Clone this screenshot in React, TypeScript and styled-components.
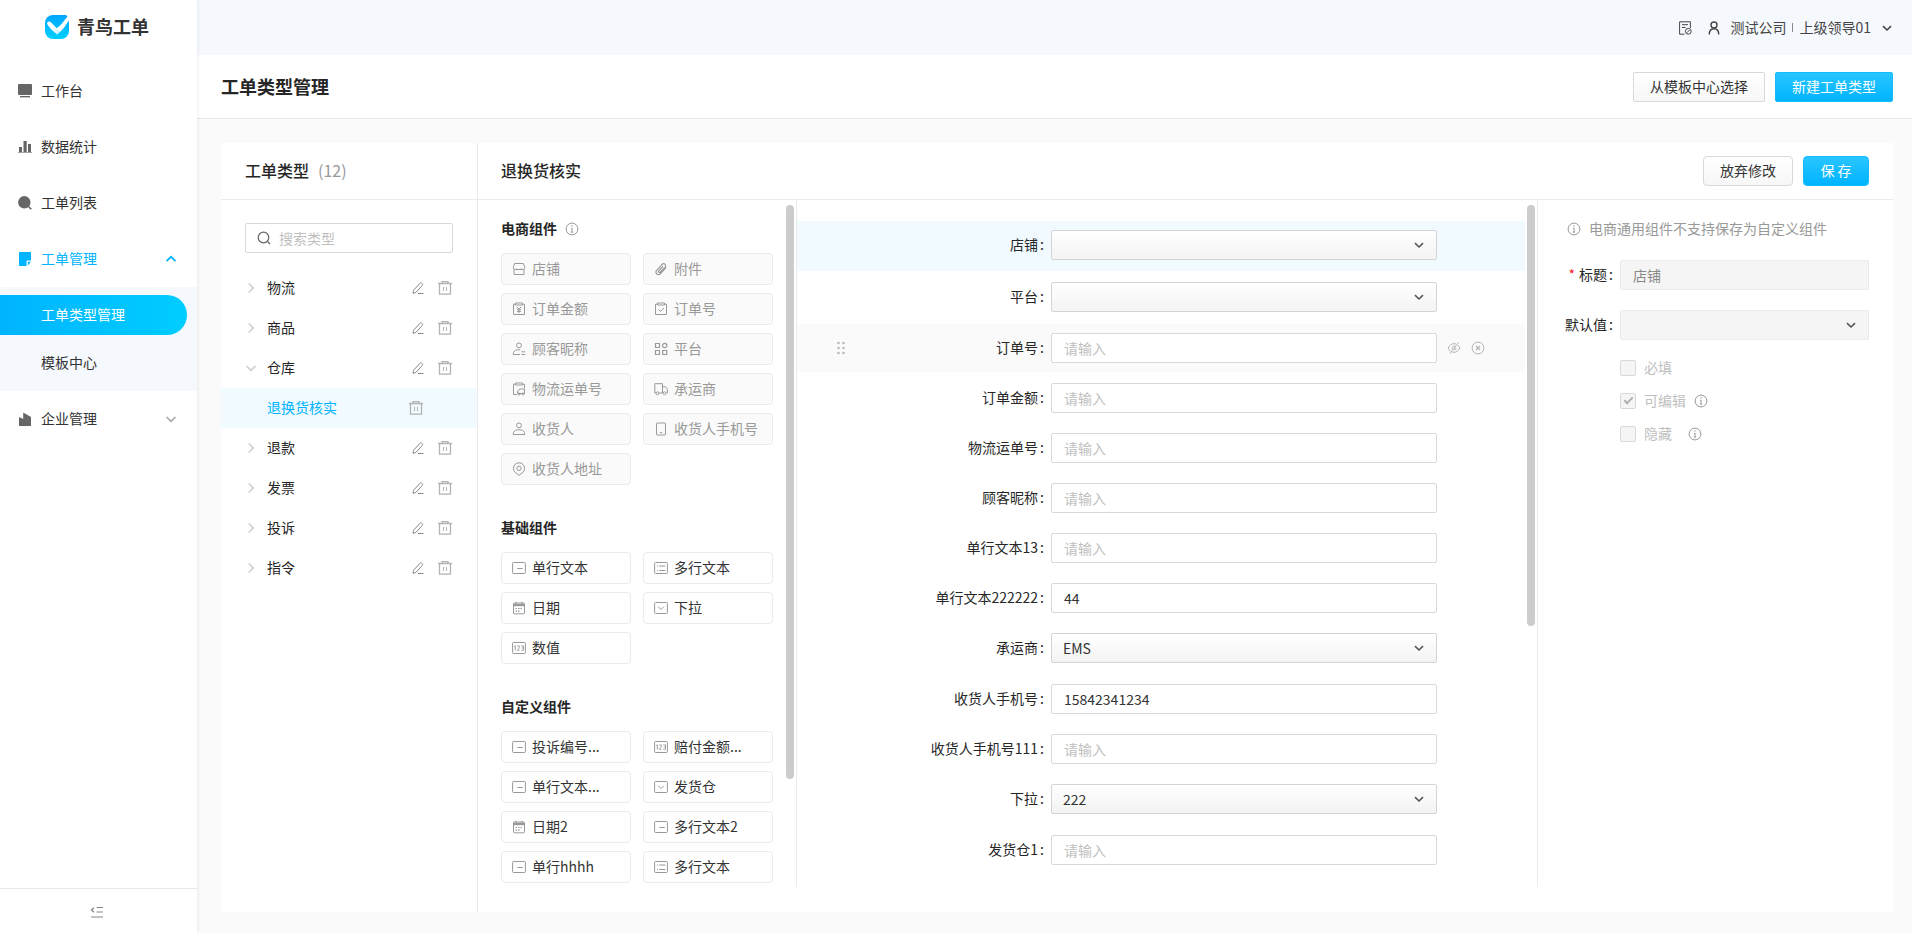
import React from "react";
import styled, { createGlobalStyle, css } from "styled-components";

const GlobalStyle = createGlobalStyle`
  *, *::before, *::after { box-sizing: border-box; }
  body {
    margin: 0;
    background: #fafafa;
    color: #333;
    font-family: "Noto Sans CJK SC", sans-serif;
    font-size: 14px;
    line-height: 20px;
  }
  button, input, select { font: inherit; color: inherit; margin: 0; }
  h1, h2, h3, ul, p { margin: 0; padding: 0; }
  ul { list-style: none; }
  a { color: inherit; text-decoration: none; }
  svg { display: block; flex: none; }
`;

/* ---------- icons ---------- */

const iconPaths: Record<string, React.ReactNode> = {
  desktop: (
    <>
      <rect x="0" y="0" width="14" height="11" rx="1" fill="currentColor" stroke="none" />
      <rect x="2" y="12" width="10" height="1.4" fill="currentColor" stroke="none" />
    </>
  ),
  chart: (
    <g fill="currentColor" stroke="none">
      <rect x="1" y="7" width="3" height="5" />
      <rect x="5.5" y="1" width="3.2" height="11" />
      <rect x="10" y="4" width="3" height="8" />
      <rect x="0" y="12" width="14" height="1" opacity="0.6" />
    </g>
  ),
  lens: (
    <>
      <circle cx="6.3" cy="6.3" r="6.2" fill="currentColor" stroke="none" />
      <path d="M10.5 10.5 13.3 13.3" strokeWidth="1.6" />
    </>
  ),
  note: (
    <>
      <path d="M1.8 0h10.4a.8.8 0 0 1 .8.8V8.500H9.500a1 1 0 0 0-1 1V14H1.800a.8.8 0 0 1-.8-.8V.8a.8.8 0 0 1 .8-.8z" fill="currentColor" stroke="none" />
      <path d="M9.800 13.600V9.800H13z" fill="currentColor" stroke="none" />
    </>
  ),
  factory: (
    <path d="M1 14V5l4.200 2V0.500L13 5v9z" fill="currentColor" stroke="none" />
  ),
  chevronUp: <path d="M2.500 9.200 7 4.800l4.500 4.400" strokeWidth="1.7" />,
  chevronDown: <path d="M2.500 5 7 9.400 11.500 5" strokeWidth="1.7" />,
  chevronRight: <path d="M4.700 2.500 9.200 7 4.700 11.500" strokeWidth="1.7" />,
  arrowDown: <path d="M3 5.200 7 9l4-3.800" strokeWidth="1.6" />,
  search: (
    <>
      <circle cx="6.500" cy="6.500" r="5.300" strokeWidth="1.200" />
      <path d="m10.400 10.400 2.600 2.600" strokeWidth="1.300" />
    </>
  ),
  edit: (
    <>
      <path d="M2 12.300 2.500 9.300 8.900 2.300a1.200 1.200 0 0 1 1.700-.1l.6.5a1.200 1.200 0 0 1 .1 1.700L5 11.300z" />
      <path d="M7 12.500h5.500" />
    </>
  ),
  trash: (
    <>
      <path d="M0 2.500h14M4 2.500V.5h6v2M1.500 2.500v10.700h11V2.500" strokeWidth="1.300" />
      <path d="M5.500 6v4M8.500 6v4" />
    </>
  ),
  info: (
    <>
      <circle cx="7" cy="7" r="5.900" />
      <path d="M7 6v4.200M6 6.300h1M5.800 10.100h2.400" />
      <circle cx="7" cy="4" r=".7" fill="currentColor" stroke="none" />
    </>
  ),
  shop: (
    <path d="M2.600 1.500h8.800l1.200 3v1.800a1.500 1.500 0 0 1-1.500 1.200H2.900a1.500 1.500 0 0 1-1.500-1.200V4.500zM2 7.500v5h10v-5M4.800 6.500v1M9.200 6.500v1" />
  ),
  clip: (
    <path d="m12 5.600-5.700 6.200a2.500 2.500 0 0 1-3.600 0 2.600 2.600 0 0 1 0-3.500l5.500-6a2 2 0 0 1 2.900 0 2.200 2.200 0 0 1 0 3L6 10.500a1 1 0 0 1-1.400-1.300L9 4.500" strokeWidth="1.2" />
  ),
  money: (
    <>
      <path d="M3.500 2.200H1.500v10.300h11V2.200h-2M3.500 1h7v2h-7z" />
      <path d="m4.800 4.800 2.200 2.400 2.200-2.400M7 7.200v4M5 7.700h4M5 9.400h4" />
    </>
  ),
  order: (
    <>
      <path d="M3.500 2.200H1.500v10.300h11V2.200h-2M3.500 1h7v2h-7z" />
      <path d="m4.500 7.500 2 2 3.300-3.500" />
    </>
  ),
  nickname: (
    <>
      <circle cx="7" cy="3.400" r="2.400" />
      <path d="M8 12.500H1.200c0-3 1.700-4.700 4.300-4.700h2.700M9.500 9.800h3.700M9.500 12.500h3.700" />
    </>
  ),
  platform: (
    <>
      <path d="M1.500 1.500h4v4h-4zM1.500 8.500h4v4h-4zM8.700 8.500h4v4h-4z" strokeWidth="1.2" />
      <circle cx="10.700" cy="3.500" r="2.200" strokeWidth="1.2" />
    </>
  ),
  waybill: (
    <>
      <path d="M5 12.500H1.500V2.200h2M10.500 2.200h2v4M3.500 1h7v2h-7z" />
      <path d="M5.500 11.500V9L8 7h4.500v4.500z" />
      <circle cx="7.200" cy="12" r="1" />
      <circle cx="11" cy="12" r="1" />
    </>
  ),
  truck: (
    <>
      <path d="M2 11H.8V1.700h7.700V11H5M8.500 4.700h3l1.900 2.600V11h-1" />
      <circle cx="3.500" cy="11.300" r="1.400" />
      <circle cx="10.500" cy="11.300" r="1.400" />
    </>
  ),
  person: (
    <>
      <circle cx="7" cy="3.400" r="2.400" />
      <path d="M1.200 12.500c0-2.800 1.700-4.700 4.300-4.700h3c2.600 0 4.300 1.900 4.300 4.700z" />
    </>
  ),
  phone: (
    <>
      <rect x="2.500" y="1" width="9" height="12" rx=".6" />
      <path d="M5.700 10.700h2.600" />
    </>
  ),
  pin: (
    <>
      <path d="M7 13.300 3.200 10.500a5.600 5.600 0 1 1 7.600 0z" />
      <circle cx="7" cy="6.300" r="2.200" />
    </>
  ),
  line: (
    <>
      <rect x=".6" y="1.500" width="12.800" height="11" rx=".8" />
      <path d="M5.300 7.500h5.400" />
    </>
  ),
  lines: (
    <>
      <rect x=".6" y="1.500" width="12.800" height="11" rx=".8" />
      <path d="M3 5h1M5.300 5h6M3 9.500h1M5.300 9.500h6" />
    </>
  ),
  calendar: (
    <>
      <rect x="1.500" y="2" width="11" height="10.800" rx=".8" />
      <path d="M1.500 4h11" strokeWidth="2.400" />
      <path d="M4 .8v2M10 .8v2" />
      <path d="M3.500 7.500h7M3.500 10.200h4.300" strokeWidth="1.2" strokeDasharray="1.500 1" />
    </>
  ),
  dropdown: (
    <>
      <rect x=".6" y="1.500" width="12.800" height="11" rx=".8" />
      <path d="m4.200 5.700 2.800 2.800 2.800-2.800" />
    </>
  ),
  number: (
    <>
      <rect x=".6" y="1.500" width="12.800" height="11" rx=".8" />
      <path d="m2.400 5.500.9-.8v4.800M5.300 4.900h2v2l-2 2.400h2.200M9.300 4.900h2.200v4.400H9.300M9.700 7h1.700" strokeWidth=".9" />
    </>
  ),
  hidden: (
    <>
      <path d="M3.500 10.200a5.400 5.400 0 0 1-2.300-3.200C2.500 4 4.600 2.700 7 2.700c.8 0 1.500.1 2.200.4M11 4.200A6 6 0 0 1 12.800 7c-1.300 3-3.400 4.300-5.800 4.300-.6 0-1.200-.1-1.700-.3M11.500 1.500 3 12.500" />
      <path d="M8 5.300A2 2 0 0 0 5.400 8M8.800 6.500a2 2 0 0 1-1.900 2.500" />
    </>
  ),
  close: (
    <>
      <circle cx="7" cy="7" r="5.900" />
      <path d="m5 5 4 4M9 5 5 9" strokeWidth="1.300" />
    </>
  ),
  drag: (
    <g fill="currentColor" stroke="none">
      {[2, 7, 12].map((y) => (
        <React.Fragment key={y}>
          <circle cx="4.500" cy={y} r="1.300" />
          <circle cx="9.500" cy={y} r="1.300" />
        </React.Fragment>
      ))}
    </g>
  ),
  record: (
    <>
      <path d="M6.500 13.200H1.600V.8h10.800V7M4 3.700h6M4 6.500h3.500" />
      <circle cx="10.300" cy="10.300" r="2.900" />
      <path d="m9 11.700 2.600-2.800" />
    </>
  ),
  user: (
    <>
      <circle cx="7" cy="4" r="3" strokeWidth="1.400" />
      <path d="M2.300 13.500c0-3.300 1.600-5.700 4.700-5.700s4.700 2.400 4.700 5.700" strokeWidth="1.400" />
    </>
  ),
  collapse: (
    <>
      <path d="M4 2.800 1.500 5 4 7.200" strokeWidth="1.300" />
      <path d="M6.500 2.500H13M6.500 7H13M1 12h12" strokeWidth="1.200" />
    </>
  ),
};

const Icon = ({ name, size = 14 }: { name: string; size?: number }) => (
  <svg width={size} height={size} viewBox="0 0 14 14" fill="none" stroke="currentColor" strokeWidth="1" aria-hidden="true">
    {iconPaths[name]}
  </svg>
);

const Logo = () => (
  <svg width="24" height="24" viewBox="0 0 24 24" aria-hidden="true">
    <defs>
      <linearGradient id="logoFill" x1="0" y1="0" x2="0" y2="1">
        <stop offset="0" stopColor="#00a6ff" />
        <stop offset="1" stopColor="#00d0ff" />
      </linearGradient>
      <linearGradient id="logoWing" x1="0" y1="0" x2="1" y2="1">
        <stop offset="0.500" stopColor="#fff" />
        <stop offset="1" stopColor="#b5ecff" />
      </linearGradient>
    </defs>
    <path d="M8 0h12c1.500 0 2.500 1 3 2.500L24 8v8a8 8 0 0 1-8 8H8a8 8 0 0 1-8-8V8a8 8 0 0 1 8-8z" fill="url(#logoFill)" />
    <path d="M12 19.500 10 14C14 12.500 17 8.500 20 4.500L24 0v5C21 10.500 17 16 12 19.500z" fill="#fff" />
    <path d="M12 19.500C8 16.500 4.500 13 2.300 9.300c-1-2 1.600-4 3.400-2.200l5.300 5.400 4 4z" fill="url(#logoWing)" />
  </svg>
);

/* ---------- shell ---------- */

/* CJK glyphs sit low in their line box; the bottom padding centres them beside icons. */
const Text = styled.span`
  display: block;
  padding-bottom: 2px;
`;

const Shell = styled.div`
  display: flex;
  height: 100vh;
`;

const Sidebar = styled.aside`
  display: flex;
  flex: none;
  flex-direction: column;
  width: 197px;
  background: #fff;
  box-shadow: 0 0 4px rgba(0, 0, 0, 0.1);
  z-index: 1;
`;

const Brand = styled.div`
  display: flex;
  align-items: center;
  gap: 8px;
  height: 54px;
  padding-left: 45px;
  margin-bottom: 9px;
  font-size: 18px;
  font-weight: 700;
`;

const Menu = styled.nav`
  flex: 1;
`;

const MenuItem = styled.a<{ $open?: boolean }>`
  display: flex;
  align-items: center;
  gap: 9px;
  height: 56px;
  padding: 0 19px 0 18px;
  color: ${(p) => (p.$open ? "#00b4ff" : "#666")};
`;

const MenuText = styled(Text)<{ $open?: boolean }>`
  flex: 1;
  color: ${(p) => (p.$open ? "#00b4ff" : "#333")};
`;

const MenuArrow = styled.span<{ $open?: boolean }>`
  color: ${(p) => (p.$open ? "#00b4ff" : "#aaa")};
`;

const SubMenu = styled.div`
  display: flex;
  flex-direction: column;
  gap: 8px;
  padding: 8px 10px 8px 0;
  background: #f5f9fd;
`;

const SubItem = styled.a<{ $active?: boolean }>`
  height: 40px;
  padding-left: 41px;
  line-height: 38px;
  border-radius: 0 20px 20px 0;
  ${(p) =>
    p.$active &&
    css`
      color: #fff;
      background: linear-gradient(90deg, #00b4ff, #00cdff);
    `}
`;

const CollapseButton = styled.button`
  display: flex;
  align-items: center;
  justify-content: center;
  height: 45px;
  padding: 2px 4px 0 0;
  border: 0;
  border-top: 1px solid #e8e8e8;
  background: none;
  color: #888;
`;

const Main = styled.div`
  display: flex;
  flex: 1;
  flex-direction: column;
  min-width: 0;
`;

const TopBar = styled.header`
  display: flex;
  flex: none;
  align-items: center;
  justify-content: flex-end;
  height: 55px;
  padding-right: 18px;
  background: #f5f9fd;
  color: #444;
`;

const TopIcons = styled.div`
  display: flex;
  gap: 15px;
  margin-right: 9px;
`;

const Account = styled.button`
  display: flex;
  align-items: center;
  padding: 0;
  border: 0;
  background: none;
`;

const Divider = styled.span`
  width: 1px;
  height: 9px;
  margin: 0 6px;
  background: #888;
`;

const AccountArrow = styled.span`
  margin-left: 9px;
`;

const PageHead = styled.div`
  display: flex;
  flex: none;
  align-items: center;
  justify-content: space-between;
  height: 64px;
  padding: 0 19px 0 24px;
  border-bottom: 1px solid #e8e8e8;
  background: #fff;
`;

const PageTitle = styled.h1`
  && { padding-bottom: 2px; }
  font-size: 18px;
  font-weight: 700;
  color: #262626;
`;

const Actions = styled.div`
  display: flex;
  gap: 10px;
`;

const Button = styled.button<{ $primary?: boolean; $round?: boolean }>`
  min-width: 66px;
  height: 30px;
  padding: 0 16px 2px;
  border: 1px solid ${(p) => (p.$primary ? "#12bcff" : "#d9d9d9")};
  border-radius: ${(p) => (p.$round ? "4px" : "2px")};
  color: ${(p) => (p.$primary ? "#fff" : "#333")};
  background: ${(p) => (p.$primary ? "linear-gradient(#29c5ff, #00b4ff)" : "linear-gradient(#fff, #f7f7f7)")};
`;

/* ---------- card ---------- */

const Card = styled.main`
  display: flex;
  flex: 1;
  min-height: 0;
  margin: 24px 19px 21px 24px;
  background: #fff;
`;

const PanelHead = styled.div`
  display: flex;
  flex: none;
  align-items: center;
  height: 57px;
  padding: 0 24px;
  border-bottom: 1px solid #ebebeb;
`;

const PanelTitle = styled.h2`
  && { padding-bottom: 2px; }
  font-size: 16px;
  font-weight: 500;
  color: #262626;
`;

const Count = styled(Text)`
  margin-left: 9px;
  font-size: 16px;
  color: #999;
`;

const TypePanel = styled.section`
  flex: none;
  width: 257px;
  border-right: 1px solid #ebebeb;
`;

const SearchBox = styled.label`
  display: flex;
  align-items: center;
  gap: 8px;
  height: 30px;
  margin: 23px 24px 15px;
  padding: 0 11px;
  border: 1px solid #d9d9d9;
  border-radius: 2px;
  color: #666;
`;

const SearchInput = styled.input`
  flex: 1;
  min-width: 0;
  height: 20px;
  padding: 0;
  border: 0;
  outline: 0;
  background: none;
  &::placeholder { color: #bfbfbf; opacity: 1; }
`;

const TypeRow = styled.li<{ $active?: boolean }>`
  display: flex;
  align-items: center;
  height: 40px;
  padding: ${(p) => (p.$active ? "0 54px 0 46px" : "0 25px 0 23px")};
  color: ${(p) => (p.$active ? "#00b4ff" : "#262626")};
  background: ${(p) => (p.$active ? "#f0faff" : "none")};
`;

const IconButton = styled.button<{ $tone?: string }>`
  padding: 0;
  border: 0;
  background: none;
  color: ${(p) => p.$tone || "#b3b3b3"};
`;

const TypeName = styled(Text)<{ $nested?: boolean }>`
  flex: 1;
  margin-left: ${(p) => (p.$nested ? "0" : "9px")};
`;

const RowTools = styled.span`
  display: flex;
  gap: 13px;
`;

const Editor = styled.section`
  display: flex;
  flex: 1;
  flex-direction: column;
  min-width: 0;
`;

const EditorHead = styled(PanelHead)`
  justify-content: space-between;
  padding-left: 23px;
`;

const EditorBody = styled.div`
  display: flex;
  flex: 1;
  min-height: 0;
  margin-bottom: 25px;
`;

const ScrollPane = styled.div`
  position: relative;
  overflow: hidden;
  border-right: 1px solid #ebebeb;
`;

const Thumb = styled.span<{ $share: number }>`
  position: absolute;
  top: 5px;
  right: 2px;
  width: 8px;
  height: ${(p) => p.$share}%;
  border-radius: 4px;
  background: #ccc;
`;

const Palette = styled(ScrollPane)`
  flex: none;
  width: 319px;
  padding: 19px 23px 0 23px;
`;

const Group = styled.section`
  margin-bottom: 33px;
`;

const GroupTitle = styled.h3`
  display: flex;
  align-items: center;
  gap: 8px;
  height: 20px;
  margin-bottom: 14px;
  font-size: 14px;
  font-weight: 700;
  color: #262626;
`;

const InfoMark = styled.span`
  color: #999;
`;

const PieceGrid = styled.div`
  display: grid;
  grid-template-columns: 130px 130px;
  gap: 8px 12px;
`;

const Piece = styled.button<{ $muted?: boolean }>`
  display: flex;
  align-items: center;
  gap: 6px;
  height: 32px;
  padding: 0 10px;
  border: 1px solid #ebebeb;
  border-radius: 4px;
  text-align: left;
  white-space: nowrap;
  color: ${(p) => (p.$muted ? "#999" : "#333")};
  background: ${(p) => (p.$muted ? "#fafafa" : "#fff")};
  svg { color: #999; }
`;

/* ---------- form ---------- */

const FormPane = styled(ScrollPane)`
  flex: 1;
  min-width: 0;
  padding: 21px 12px 0 0;
`;

const FieldList = styled.div`
  display: flex;
  flex-direction: column;
  gap: 2px;
`;

const FieldRow = styled.div<{ $tone?: "active" | "hover"; $select?: boolean }>`
  display: grid;
  grid-template-columns: 51px 203px minmax(0, 1fr) 88px;
  align-items: start;
  height: ${(p) => (p.$tone === "active" ? "50px" : p.$select ? "49px" : "48px")};
  padding-top: 9px;
  background: ${(p) => (p.$tone === "active" ? "#f0faff" : p.$tone === "hover" ? "#fafafa" : "none")};
`;

const Label = styled.label`
  line-height: 28px;
  text-align: right;
  white-space: nowrap;
  color: #262626;
  &::after {
    content: ":";
    margin: 0 7px 0 2px;
  }
`;

const TextInput = styled.input`
  width: 100%;
  height: 30px;
  padding: 0 12px 1px;
  border: 1px solid #d9d9d9;
  border-radius: 2px;
  outline: 0;
  background: #fff;
  color: #333;
  &::placeholder { color: #bfbfbf; opacity: 1; }
  &:disabled { border-color: #ebebeb; background: #f5f5f5; color: #888; }
`;

const SelectWrap = styled.span`
  position: relative;
  display: block;
`;

const SelectBox = styled.select`
  display: block;
  appearance: none;
  width: 100%;
  height: 30px;
  padding: 0 30px 0 11px;
  border: 1px solid #d4d4d4;
  border-radius: 2px;
  outline: 0;
  background: linear-gradient(#fff, #f3f3f3);
  color: #333;
  &:disabled { border-color: #ebebeb; background: #f5f5f5; opacity: 1; }
`;

const SelectArrow = styled.span`
  position: absolute;
  top: 8px;
  right: 11px;
  color: #555;
  pointer-events: none;
`;

const HandleCell = styled.span`
  display: flex;
  align-items: center;
  justify-content: flex-end;
  height: 30px;
  color: #bbb;
`;

const FieldTools = styled.span`
  display: flex;
  align-items: center;
  gap: 10px;
  height: 30px;
  padding-left: 10px;
`;

/* ---------- properties ---------- */

const Properties = styled.section`
  flex: none;
  width: 355px;
  padding: 19px 24px 0 27px;
`;

const Notice = styled.p`
  && { padding-left: 2px; }
  display: flex;
  align-items: center;
  gap: 8px;
  height: 20px;
  margin-bottom: 21px;
  color: #999;
`;

const PropRow = styled.div`
  display: grid;
  grid-template-columns: 55px minmax(0, 1fr);
  align-items: start;
  margin-bottom: 20px;
`;

const Required = styled.span`
  margin-right: 4px;
  color: #f5222d;
`;

const CheckRow = styled.div`
  display: flex;
  align-items: center;
  height: 16px;
  margin: 0 0 17px 55px;
  color: #bfbfbf;
`;

const CheckLabel = styled.label<{ $wide?: boolean }>`
  display: flex;
  align-items: center;
  gap: 8px;
  margin-right: ${(p) => (p.$wide ? "16px" : "8px")};
`;

const Checkbox = styled.input`
  position: relative;
  appearance: none;
  width: 16px;
  height: 16px;
  border: 1px solid #d9d9d9;
  border-radius: 2px;
  background: #f5f5f5;
  &:checked::after {
    content: "";
    position: absolute;
    top: 1px;
    left: 5px;
    width: 5px;
    height: 9px;
    border: solid #b0b0b0;
    border-width: 0 2px 2px 0;
    transform: rotate(45deg);
  }
`;

/* ---------- data ---------- */

const types: { name: string; open?: boolean; child?: string }[] = [
  { name: "物流" },
  { name: "商品" },
  { name: "仓库", open: true, child: "退换货核实" },
  { name: "退款" },
  { name: "发票" },
  { name: "投诉" },
  { name: "指令" },
];

const groups: { title: string; info?: boolean; muted?: boolean; items: [string, string][] }[] = [
  {
    title: "电商组件",
    info: true,
    muted: true,
    items: [
      ["shop", "店铺"],
      ["clip", "附件"],
      ["money", "订单金额"],
      ["order", "订单号"],
      ["nickname", "顾客昵称"],
      ["platform", "平台"],
      ["waybill", "物流运单号"],
      ["truck", "承运商"],
      ["person", "收货人"],
      ["phone", "收货人手机号"],
      ["pin", "收货人地址"],
    ],
  },
  {
    title: "基础组件",
    items: [
      ["line", "单行文本"],
      ["lines", "多行文本"],
      ["calendar", "日期"],
      ["dropdown", "下拉"],
      ["number", "数值"],
    ],
  },
  {
    title: "自定义组件",
    items: [
      ["line", "投诉编号..."],
      ["number", "赔付金额..."],
      ["line", "单行文本..."],
      ["dropdown", "发货仓"],
      ["calendar", "日期2"],
      ["line", "多行文本2"],
      ["line", "单行hhhh"],
      ["lines", "多行文本"],
    ],
  },
];

type Field = { label: string; select?: boolean; value?: string; tone?: "active" | "hover" };

const fields: Field[] = [
  { label: "店铺", select: true, tone: "active" },
  { label: "平台", select: true },
  { label: "订单号", tone: "hover" },
  { label: "订单金额" },
  { label: "物流运单号" },
  { label: "顾客昵称" },
  { label: "单行文本13" },
  { label: "单行文本222222", value: "44" },
  { label: "承运商", select: true, value: "EMS" },
  { label: "收货人手机号", value: "15842341234" },
  { label: "收货人手机号111" },
  { label: "下拉", select: true, value: "222" },
  { label: "发货仓1" },
];

const Select = ({ id, value = "", disabled }: { id: string; value?: string; disabled?: boolean }) => (
  <SelectWrap>
    <SelectBox id={id} defaultValue={value} disabled={disabled}>
      <option value={value}>{value}</option>
    </SelectBox>
    <SelectArrow>
      <Icon name="arrowDown" />
    </SelectArrow>
  </SelectWrap>
);

const FieldItem = ({ field, id }: { field: Field; id: string }) => (
  <FieldRow $tone={field.tone} $select={field.select}>
    <HandleCell>{field.tone === "hover" && <Icon name="drag" />}</HandleCell>
    <Label htmlFor={id}>{field.label}</Label>
    {field.select ? (
      <Select id={id} value={field.value} />
    ) : (
      <TextInput id={id} placeholder="请输入" defaultValue={field.value} />
    )}
    {field.tone === "hover" && (
      <FieldTools>
        <IconButton aria-label="隐藏">
          <Icon name="hidden" />
        </IconButton>
        <IconButton aria-label="删除">
          <Icon name="close" />
        </IconButton>
      </FieldTools>
    )}
  </FieldRow>
);

export default function App() {
  return (
    <>
      <GlobalStyle />
      <Shell>
        <Sidebar>
          <Brand>
            <Logo />
            <Text>青鸟工单</Text>
          </Brand>
          <Menu>
            <MenuItem href="#">
              <Icon name="desktop" />
              <MenuText>工作台</MenuText>
            </MenuItem>
            <MenuItem href="#">
              <Icon name="chart" />
              <MenuText>数据统计</MenuText>
            </MenuItem>
            <MenuItem href="#">
              <Icon name="lens" />
              <MenuText>工单列表</MenuText>
            </MenuItem>
            <MenuItem href="#" $open>
              <Icon name="note" />
              <MenuText $open>工单管理</MenuText>
              <MenuArrow $open>
                <Icon name="chevronUp" />
              </MenuArrow>
            </MenuItem>
            <SubMenu>
              <SubItem href="#" $active>
                工单类型管理
              </SubItem>
              <SubItem href="#">模板中心</SubItem>
            </SubMenu>
            <MenuItem href="#">
              <Icon name="factory" />
              <MenuText>企业管理</MenuText>
              <MenuArrow>
                <Icon name="chevronDown" />
              </MenuArrow>
            </MenuItem>
          </Menu>
          <CollapseButton aria-label="收起菜单">
            <Icon name="collapse" />
          </CollapseButton>
        </Sidebar>

        <Main>
          <TopBar>
            <TopIcons>
              <Icon name="record" />
              <Icon name="user" />
            </TopIcons>
            <Account>
              <Text>测试公司</Text>
              <Divider />
              <Text>上级领导01</Text>
              <AccountArrow>
                <Icon name="arrowDown" />
              </AccountArrow>
            </Account>
          </TopBar>
          <PageHead>
            <PageTitle>工单类型管理</PageTitle>
            <Actions>
              <Button>从模板中心选择</Button>
              <Button $primary>新建工单类型</Button>
            </Actions>
          </PageHead>

          <Card>
            <TypePanel>
              <PanelHead>
                <PanelTitle>工单类型</PanelTitle>
                <Count>(12)</Count>
              </PanelHead>
              <SearchBox>
                <Icon name="search" />
                <SearchInput type="text" placeholder="搜索类型" aria-label="搜索类型" />
              </SearchBox>
              <ul>
                {types.map((t) => (
                  <React.Fragment key={t.name}>
                    <TypeRow>
                      <IconButton $tone="#d0d0d0" aria-label={t.open ? "收起" : "展开"}>
                        <Icon name={t.open ? "chevronDown" : "chevronRight"} />
                      </IconButton>
                      <TypeName>{t.name}</TypeName>
                      <RowTools>
                        <IconButton $tone="#888" aria-label="编辑">
                          <Icon name="edit" />
                        </IconButton>
                        <IconButton aria-label="删除">
                          <Icon name="trash" />
                        </IconButton>
                      </RowTools>
                    </TypeRow>
                    {t.child && (
                      <TypeRow $active>
                        <TypeName $nested>{t.child}</TypeName>
                        <IconButton aria-label="删除">
                          <Icon name="trash" />
                        </IconButton>
                      </TypeRow>
                    )}
                  </React.Fragment>
                ))}
              </ul>
            </TypePanel>

            <Editor>
              <EditorHead>
                <PanelTitle>退换货核实</PanelTitle>
                <Actions>
                  <Button $round>放弃修改</Button>
                  <Button $primary $round>
                    保 存
                  </Button>
                </Actions>
              </EditorHead>
              <EditorBody>
                <Palette>
                  {groups.map((g) => (
                    <Group key={g.title}>
                      <GroupTitle>
                        <Text>{g.title}</Text>
                        {g.info && (
                          <InfoMark>
                            <Icon name="info" />
                          </InfoMark>
                        )}
                      </GroupTitle>
                      <PieceGrid>
                        {g.items.map(([icon, text]) => (
                          <Piece key={text} $muted={g.muted}>
                            <Icon name={icon} />
                            <Text>{text}</Text>
                          </Piece>
                        ))}
                      </PieceGrid>
                    </Group>
                  ))}
                  <Thumb $share={83.5} />
                </Palette>

                <FormPane>
                  <FieldList>
                    {fields.map((f, i) => (
                      <FieldItem key={f.label} field={f} id={`field-${i}`} />
                    ))}
                  </FieldList>
                  <Thumb $share={61.3} />
                </FormPane>

                <Properties>
                  <Notice>
                    <Icon name="info" />
                    <Text>电商通用组件不支持保存为自定义组件</Text>
                  </Notice>
                  <PropRow>
                    <Label htmlFor="prop-title">
                      <Required>*</Required>标题
                    </Label>
                    <TextInput id="prop-title" defaultValue="店铺" disabled />
                  </PropRow>
                  <PropRow>
                    <Label htmlFor="prop-default">默认值</Label>
                    <Select id="prop-default" disabled />
                  </PropRow>
                  <CheckRow>
                    <CheckLabel>
                      <Checkbox type="checkbox" disabled />
                      <Text>必填</Text>
                    </CheckLabel>
                  </CheckRow>
                  <CheckRow>
                    <CheckLabel>
                      <Checkbox type="checkbox" defaultChecked disabled />
                      <Text>可编辑</Text>
                    </CheckLabel>
                    <InfoMark>
                      <Icon name="info" />
                    </InfoMark>
                  </CheckRow>
                  <CheckRow>
                    <CheckLabel $wide>
                      <Checkbox type="checkbox" disabled />
                      <Text>隐藏</Text>
                    </CheckLabel>
                    <InfoMark>
                      <Icon name="info" />
                    </InfoMark>
                  </CheckRow>
                </Properties>
              </EditorBody>
            </Editor>
          </Card>
        </Main>
      </Shell>
    </>
  );
}
